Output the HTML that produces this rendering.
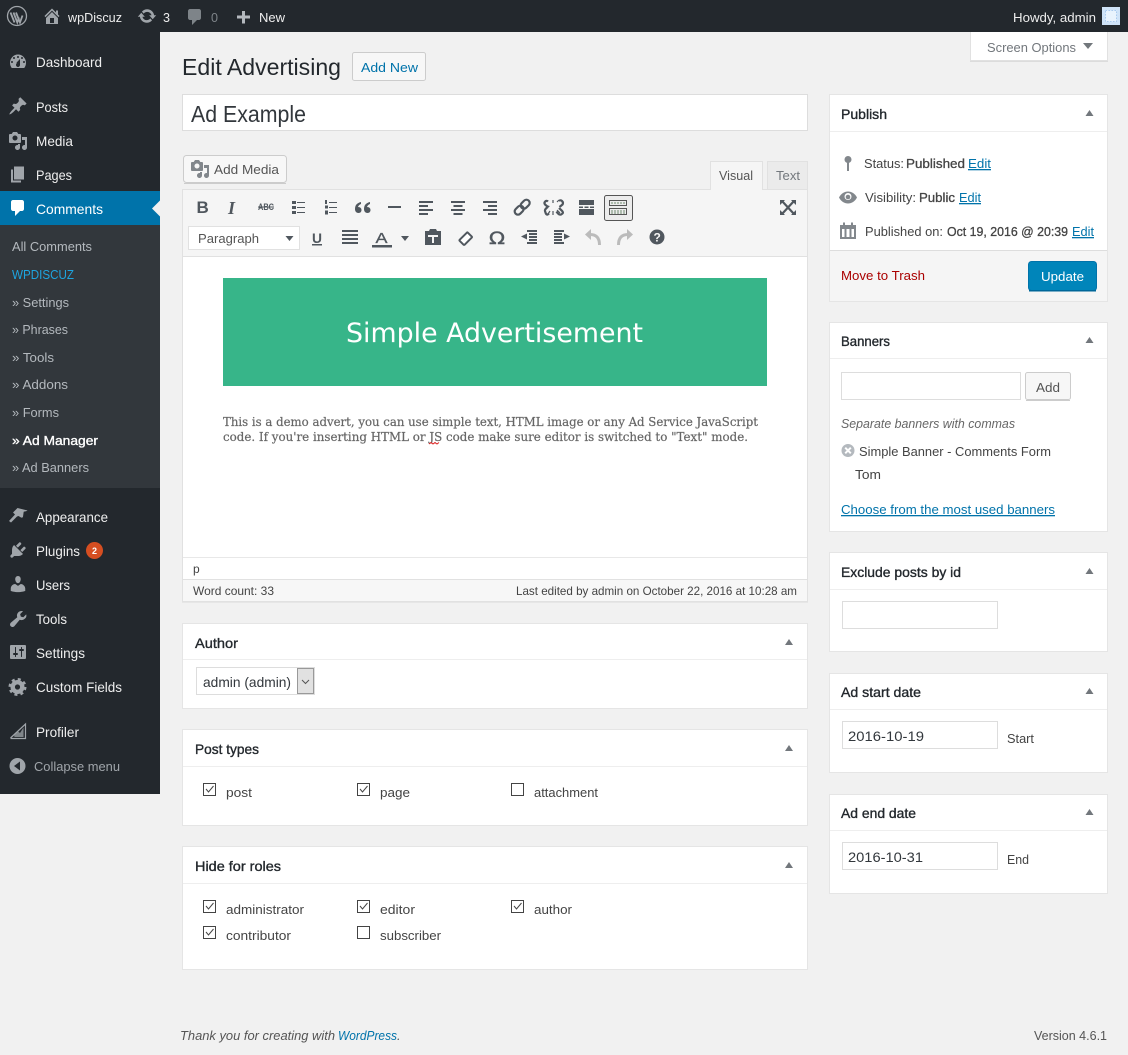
<!DOCTYPE html>
<html lang="en"><head><meta charset="utf-8"><title>Edit Advertising</title>
<style>
html,body{margin:0;padding:0;background:#f1f1f1;width:1128px;height:1055px;overflow:hidden}
svg{display:block}
text{font-family:"Liberation Sans",sans-serif;font-size:13px;fill:#444;white-space:pre}
.m{font-size:14px;fill:#eee}
.s{fill:#b4b9be}
.t{font-size:14px;fill:#23282d;stroke:#23282d;stroke-width:.35px}
.b{stroke:#444;stroke-width:.3px}
.l{fill:#0073aa;text-decoration:underline}
.i{fill:#a0a5aa}
.e{fill:#50575e}
</style></head><body>
<svg width="1128" height="1055" viewBox="0 0 1128 1055" xmlns="http://www.w3.org/2000/svg">
<rect width="1128" height="1055" fill="#f1f1f1"/>
<!-- sidebar -->
<rect x="0" y="0" width="160" height="794" fill="#23282d"/>
<rect x="0" y="225" width="160" height="263" fill="#32373c"/>
<rect x="0" y="191" width="160" height="34" fill="#0073aa"/>
<path d="M160 200.500l-8 8 8 8z" fill="#f1f1f1"/>
<!-- screen options tab -->
<rect x="970.500" y="26.500" width="137" height="34" fill="#fff" stroke="#e1e1e1"/>
<rect x="970" y="61" width="138" height="1" fill="#dcdcdc"/>
<text x="987" y="52" style="fill:#72777c" textLength="89" lengthAdjust="spacingAndGlyphs">Screen Options</text>
<path d="M1083 43h10l-5 6z" fill="#72777c"/>
<!-- admin bar -->
<rect x="0" y="0" width="1128" height="32" fill="#23282d"/>
<g fill="none" stroke="#a0a5aa"><circle cx="17" cy="16" r="9.500" stroke-width="1.300"/><path d="M10.500 12.500l4 10M13.500 12.500l3.800 10 1.700-5M16 12.500l4 10 2.500-7" stroke-width="1.800"/></g>
<path class="i" transform="translate(42,6)" d="M16 8.500l1.530 1.530-1.060 1.060L10 4.620l-6.470 6.470-1.060-1.060L10 2.500l4 4v-2h2v4zm-6-2.460l6 5.990V18H4v-5.970zM12 17v-5H8v5h4z"/>
<text x="68" y="22" style="fill:#eee" textLength="54" lengthAdjust="spacingAndGlyphs">wpDiscuz</text>
<path class="i" transform="translate(137,6)" d="M10.200 3.280c3.530 0 6.430 2.610 6.920 6h2.080l-3.500 4-3.500-4h2.320c-.45-1.970-2.210-3.450-4.320-3.450-1.450 0-2.730.71-3.540 1.780L4.950 5.660C6.230 4.200 8.110 3.280 10.200 3.280zm-.4 13.440c-3.520 0-6.430-2.610-6.920-6H.8l3.500-4c1.170 1.330 2.330 2.670 3.500 4H5.480c.45 1.970 2.210 3.450 4.320 3.450 1.450 0 2.730-.71 3.540-1.780l1.710 1.950c-1.280 1.460-3.150 2.380-5.250 2.380z"/>
<text x="163" y="22" style="fill:#eee" textLength="7" lengthAdjust="spacingAndGlyphs">3</text>
<path transform="translate(185,7)" fill="#7e8489" d="M5 2h9c1.100 0 2 .9 2 2v7c0 1.100-.9 2-2 2h-2l-5 5v-5H5c-1.100 0-2-.9-2-2V4c0-1.100.9-2 2-2z"/>
<text x="211" y="22" style="fill:#7e8489" textLength="7" lengthAdjust="spacingAndGlyphs">0</text>
<path d="M242 11h3v4.500h5v3h-5v5h-3v-5h-5v-3h5z" fill="#b4b9be"/>
<text x="259" y="22" style="fill:#eee" textLength="26" lengthAdjust="spacingAndGlyphs">New</text>
<text x="1013" y="22" style="fill:#eee" textLength="83" lengthAdjust="spacingAndGlyphs">Howdy, admin</text>
<rect x="1102" y="7" width="18" height="18" fill="#cfe3f8"/>
<rect x="1105.500" y="10.500" width="11" height="11" fill="#e9f3fd" stroke="#a9caee" stroke-dasharray="1.500 1.500"/>
<!-- sidebar icons -->
<path class="i" transform="translate(8,52)" fill-rule="evenodd" d="M3.760 16h12.480c1.100-1.430 1.760-3.210 1.760-5.150 0-4.620-3.580-8.370-8-8.370s-8 3.750-8 8.370c0 1.940.66 3.720 1.760 5.150zM10 4.000c.55 0 1 .45 1 1s-.45 1-1 1-1-.45-1-1 .45-1 1-1zM6 5.000c.55 0 1 .45 1 1s-.45 1-1 1-1-.45-1-1 .45-1 1-1zm8 0c.55 0 1 .45 1 1s-.45 1-1 1-1-.45-1-1 .45-1 1-1zm-5.370 5.550L12 7v6c0 1.100-.9 2-2 2s-2-.9-2-2c0-.57.24-1.080.63-1.450zM4 9.000c.55 0 1 .45 1 1s-.45 1-1 1-1-.45-1-1 .45-1 1-1zm12 0c.55 0 1 .45 1 1s-.45 1-1 1-1-.45-1-1 .45-1 1-1z"/>
<path class="i" transform="translate(8,96)" d="M10.440 3.020l1.820-1.820 6.360 6.350-1.830 1.820c-1.050-.68-2.480-.57-3.410.36l-.75.75c-.92.93-1.040 2.350-.35 3.410l-1.830 1.820-2.410-2.410-2.800 2.790c-.42.42-3.380 2.710-3.800 2.290s1.860-3.390 2.280-3.810l2.790-2.790L4.100 9.360l1.830-1.820c1.050.69 2.480.57 3.400-.36l.75-.75c.93-.92 1.050-2.350.36-3.410z"/>
<path class="i" transform="translate(8,131)" fill-rule="evenodd" d="M13 11V4c0-.55-.45-1-1-1h-1.670L9 1H5L3.670 3H2c-.55 0-1 .45-1 1v7c0 .55.45 1 1 1h10c.55 0 1-.45 1-1zM7 4.500c1.380 0 2.500 1.120 2.500 2.500S8.380 9.500 7 9.500 4.500 8.380 4.500 7 5.620 4.500 7 4.500zM14 6h5v10.500c0 1.380-1.120 2.500-2.500 2.500S14 17.880 14 16.500s1.120-2.500 2.500-2.500c.17 0 .34.020.5.050V9h-3V6zm-4 8.050V13h2v3.500c0 1.380-1.120 2.500-2.500 2.500S7 17.880 7 16.500 8.120 14 9.500 14c.17 0 .34.020.5.050z"/>
<path class="i" transform="translate(8,164.500)" d="M6 15V2h10v13H6zm-1 1h8v2H3V5h2v11z"/>
<path transform="translate(8,198)" fill="#fff" d="M5 2h9c1.100 0 2 .9 2 2v7c0 1.100-.9 2-2 2h-2l-5 5v-5H5c-1.100 0-2-.9-2-2V4c0-1.100.9-2 2-2z"/>
<path class="i" d="M9 521l6-6.500-2-2 4.500-4.500 10 2.500c-1.500 1.200-3 .8-3.800 1.200l-.7 5c-.3.8-1.200 1.200-2 .8l-2.500-1.500-1.500.5-6 6z"/>
<path class="i" transform="translate(8,540)" d="M13.110 4.360L9.870 7.600 8 5.730l3.240-3.240c.35-.34 1.050-.2 1.560.32.52.51.66 1.210.31 1.550zm-8 1.770l.91-1.120 9.010 9.010-1.190.84c-.71.71-2.630 1.160-3.820 1.160H6.140L4.900 17.260c-.59.59-1.540.59-2.120 0-.59-.58-.59-1.530 0-2.120l1.240-1.240v-3.880c0-1.130.4-3.190 1.090-3.890zm7.260 3.970l3.240-3.240c.34-.35 1.040-.21 1.550.31.52.51.66 1.210.31 1.550l-3.240 3.250z"/>
<path class="i" transform="translate(8,574)" d="M10 9.250c-2.270 0-2.730-3.440-2.730-3.440C7 4.020 7.820 2 9.970 2c2.160 0 2.980 2.020 2.710 3.810 0 0-.41 3.440-2.680 3.440zm0 2.570L12.720 10c2.390 0 4.520 2.330 4.520 4.530v2.490s-3.650 1.130-7.240 1.130c-3.650 0-7.240-1.130-7.240-1.130v-2.490c0-2.250 1.940-4.480 4.470-4.480z"/>
<path class="i" transform="translate(8,609)" d="M16.680 9.770c-1.340 1.340-3.300 1.670-4.950.99l-5.410 6.520c-.99.99-2.590.99-3.570 0-.99-.98-.99-2.580 0-3.570l6.520-5.420c-.68-1.650-.35-3.610.99-4.950 1.280-1.280 3.120-1.640 4.720-1.110l-2.850 2.850.7 2.500 2.500.7 2.850-2.850c.53 1.600.17 3.440-1.500 4.340z"/>
<path class="i" transform="translate(8,642)" fill-rule="evenodd" d="M18 16V4c0-.55-.45-1-1-1H3c-.55 0-1 .45-1 1v12c0 .55.45 1 1 1h14c.55 0 1-.45 1-1zM8 11h1c.55 0 1 .45 1 1s-.45 1-1 1H8v1.500c0 .28-.22.5-.5.5s-.5-.22-.5-.5V13H6c-.55 0-1-.45-1-1s.45-1 1-1h1V5.500c0-.28.22-.5.5-.5s.5.22.5.5V11zm5-2h-1c-.55 0-1-.45-1-1s.45-1 1-1h1V5.500c0-.28.22-.5.5-.5s.5.22.5.5V7h1c.55 0 1 .45 1 1s-.45 1-1 1h-1v5.500c0 .28-.22.5-.5.5s-.5-.22-.5-.5V9z"/>
<g fill="none" stroke="#a0a5aa"><circle cx="17.500" cy="687" r="4.800" stroke-width="4.400"/><circle cx="17.500" cy="687" r="7.800" stroke-width="2.400" stroke-dasharray="3 3.130"/></g>
<path d="M10.500 738.500h15V724l-15 14" fill="none" stroke="#a0a5aa" stroke-width="1.200"/>
<path d="M14 735l3.500-4 2.500 2 3.500-5.500v9.500h-9z" fill="#a0a5aa" opacity=".75"/>
<circle cx="17.500" cy="766" r="8" fill="#a0a5aa"/><path d="M20 761.500v9l-6-4.500z" fill="#23282d"/>
<!-- sidebar text -->
<text class="m" x="36" y="67" textLength="66" lengthAdjust="spacingAndGlyphs">Dashboard</text>
<text class="m" x="36" y="112" textLength="32" lengthAdjust="spacingAndGlyphs">Posts</text>
<text class="m" x="36" y="146" textLength="37" lengthAdjust="spacingAndGlyphs">Media</text>
<text class="m" x="36" y="180" textLength="36" lengthAdjust="spacingAndGlyphs">Pages</text>
<text class="m" x="36" y="214" style="fill:#fff" textLength="67" lengthAdjust="spacingAndGlyphs">Comments</text>
<text class="s" x="12" y="251" textLength="80" lengthAdjust="spacingAndGlyphs">All Comments</text>
<text x="12" y="279" style="fill:#1ea5e0" textLength="62" lengthAdjust="spacingAndGlyphs">WPDISCUZ</text>
<text class="s" x="12" y="307" textLength="57" lengthAdjust="spacingAndGlyphs">» Settings</text>
<text class="s" x="12" y="334" textLength="56" lengthAdjust="spacingAndGlyphs">» Phrases</text>
<text class="s" x="12" y="362" textLength="42" lengthAdjust="spacingAndGlyphs">» Tools</text>
<text class="s" x="12" y="389" textLength="56" lengthAdjust="spacingAndGlyphs">» Addons</text>
<text class="s" x="12" y="417" textLength="47" lengthAdjust="spacingAndGlyphs">» Forms</text>
<text x="12" y="445" style="fill:#fff;stroke:#fff;stroke-width:.35px" textLength="86" lengthAdjust="spacingAndGlyphs">» Ad Manager</text>
<text class="s" x="12" y="472" textLength="77" lengthAdjust="spacingAndGlyphs">» Ad Banners</text>
<text class="m" x="36" y="522" textLength="72" lengthAdjust="spacingAndGlyphs">Appearance</text>
<text class="m" x="36" y="556" textLength="44" lengthAdjust="spacingAndGlyphs">Plugins</text>
<circle cx="94.500" cy="550.500" r="8.500" fill="#d54e21"/>
<text x="92" y="554" style="font-size:9px;fill:#fff;font-weight:bold">2</text>
<text class="m" x="36" y="590" textLength="34" lengthAdjust="spacingAndGlyphs">Users</text>
<text class="m" x="36" y="624" textLength="31" lengthAdjust="spacingAndGlyphs">Tools</text>
<text class="m" x="36" y="658" textLength="49" lengthAdjust="spacingAndGlyphs">Settings</text>
<text class="m" x="36" y="692" textLength="86" lengthAdjust="spacingAndGlyphs">Custom Fields</text>
<text class="m" x="36" y="737" textLength="43" lengthAdjust="spacingAndGlyphs">Profiler</text>
<text x="34" y="771" style="fill:#a0a5aa" textLength="86" lengthAdjust="spacingAndGlyphs">Collapse menu</text>

<!-- header -->
<text x="182" y="75" style="font-size:23px;fill:#23282d" textLength="159" lengthAdjust="spacingAndGlyphs">Edit Advertising</text>
<rect x="352.500" y="52.500" width="73" height="28" rx="2" fill="#f7f7f7" stroke="#ccc"/>
<text x="361" y="72" style="fill:#0073aa" textLength="57" lengthAdjust="spacingAndGlyphs">Add New</text>
<rect x="182.500" y="94.500" width="625" height="36" fill="#fff" stroke="#ddd"/>
<text x="191" y="122" style="font-size:23px;fill:#32373c" textLength="115" lengthAdjust="spacingAndGlyphs">Ad Example</text>

<!-- editor -->
<rect x="183.500" y="155.500" width="103" height="27" rx="3" fill="#f7f7f7" stroke="#ccc"/>
<rect x="184" y="183" width="102" height="1" fill="#ccc"/>
<path transform="translate(190,159)" fill="#82878c" fill-rule="evenodd" d="M13 11V4c0-.55-.45-1-1-1h-1.670L9 1H5L3.670 3H2c-.55 0-1 .45-1 1v7c0 .55.45 1 1 1h10c.55 0 1-.45 1-1zM7 4.500c1.380 0 2.500 1.120 2.500 2.500S8.380 9.500 7 9.500 4.500 8.380 4.500 7 5.620 4.500 7 4.500zM14 6h5v10.500c0 1.380-1.120 2.500-2.500 2.500S14 17.880 14 16.500s1.120-2.500 2.500-2.500c.17 0 .34.020.5.050V9h-3V6zm-4 8.050V13h2v3.500c0 1.380-1.120 2.500-2.500 2.500S7 17.880 7 16.500 8.120 14 9.500 14c.17 0 .34.020.5.050z"/>
<text x="214" y="174" style="fill:#555" textLength="65" lengthAdjust="spacingAndGlyphs">Add Media</text>
<rect x="710.500" y="161.500" width="52" height="29" fill="#f5f5f5" stroke="#e1e1e1"/>
<rect x="767.500" y="161.500" width="40" height="28" fill="#ebebeb" stroke="#e1e1e1"/>
<text x="719" y="180" style="fill:#555" textLength="34" lengthAdjust="spacingAndGlyphs">Visual</text>
<text x="776" y="180" style="fill:#72777c" textLength="24" lengthAdjust="spacingAndGlyphs">Text</text>
<rect x="182.500" y="189.500" width="625" height="412" fill="#fff" stroke="#e1e1e1"/>
<rect x="183" y="190" width="624" height="66" fill="#f5f5f5"/>
<rect x="711" y="189" width="51" height="2" fill="#f5f5f5"/>
<rect x="183" y="256" width="624" height="1" fill="#e1e1e1"/>
<rect x="183" y="557" width="624" height="1" fill="#e8e8e8"/>
<rect x="183" y="579" width="624" height="1" fill="#e1e1e1"/>
<rect x="183" y="580" width="624" height="21" fill="#f7f7f7"/>
<rect x="182" y="602" width="626" height="1" fill="#e6e6e6"/>
<!-- toolbar row 1 -->
<text x="196.500" y="213" style="font-size:17px;font-weight:bold;fill:#50575e">B</text>
<text x="228" y="214" style="font-size:18px;font-weight:bold;font-style:italic;fill:#50575e;font-family:'Liberation Serif',serif">I</text>
<text x="258" y="210" style="font-size:9px;font-weight:bold;fill:#50575e" textLength="16" lengthAdjust="spacingAndGlyphs">ABC</text>
<rect x="258" y="206.500" width="16" height="1" fill="#50575e"/>
<g fill="#50575e">
<rect x="292" y="201" width="4" height="3"/><rect x="292" y="206" width="4" height="3"/><rect x="292" y="211" width="4" height="3"/>
<rect x="297" y="202" width="8" height="1"/><rect x="297" y="207" width="8" height="1"/><rect x="297" y="212" width="8" height="1"/>
<rect x="325" y="200" width="2" height="4"/><rect x="325" y="205.500" width="3" height="3"/><rect x="325" y="210.500" width="3" height="4"/>
<rect x="329" y="202" width="8" height="1"/><rect x="329" y="207" width="8" height="1"/><rect x="329" y="212" width="8" height="1"/>
<path d="M361 202c-4 1-6 3-6 7 0 2 1 4 3.500 4 2 0 3-1.500 3-3s-1-3-3.500-3c.3-1.200 1.500-2.500 3-3zM370 202c-4 1-6 3-6 7 0 2 1 4 3.500 4 2 0 3-1.500 3-3s-1-3-3.500-3c.3-1.200 1.500-2.500 3-3z"/>
<rect x="388" y="206" width="13" height="2"/>
<rect x="419" y="201" width="14" height="2"/><rect x="419" y="205" width="9" height="2"/><rect x="419" y="209" width="14" height="2"/><rect x="419" y="213" width="9" height="2"/>
<rect x="451" y="201" width="14" height="2"/><rect x="453.500" y="205" width="9" height="2"/><rect x="451" y="209" width="14" height="2"/><rect x="453.500" y="213" width="9" height="2"/>
<rect x="483" y="201" width="14" height="2"/><rect x="488" y="205" width="9" height="2"/><rect x="483" y="209" width="14" height="2"/><rect x="488" y="213" width="9" height="2"/>
<rect x="579" y="200" width="15" height="5"/><rect x="579" y="209" width="15" height="6"/><rect x="579" y="206.500" width="4" height="1.500"/><rect x="584.500" y="206.500" width="4" height="1.500"/><rect x="590" y="206.500" width="4" height="1.500"/>
</g>
<g fill="none" stroke="#50575e" stroke-width="2.200">
<rect x="514" y="207" width="10" height="6.500" rx="3.250" transform="rotate(-45 519 210)"/>
<rect x="520" y="201" width="10" height="6.500" rx="3.250" transform="rotate(-45 525 204)"/>
<path d="M549 213.500c-3 3-3.500-1-4-2.500s3-5 4-4M559 201c2 -2 5 1 3.500 3.500l-3 2.500"/>
<path d="M548 201.500c-2-2-4.500 1-3 3l3 2.500M559 208c2 2 5 4 3.500 5.500s-3.500 2-6-2" />
<path d="M553 203v-3M557 202l2-2M550 211l-2 3M553 211v4M557 210l3 3" stroke-width="1.200"/>
</g>
<rect x="604.500" y="195.500" width="28" height="25" rx="2" fill="#ececec" stroke="#555"/>
<g fill="none" stroke="#555" stroke-width="1"><rect x="609.500" y="200.500" width="17" height="5"/><rect x="609.500" y="208.500" width="17" height="6"/></g>
<path d="M611 203h14M611 211h14M611 213h14" stroke="#6e8a6e" stroke-width="1" stroke-dasharray="2 1" fill="none"/>
<path d="M782 201l12 13M794 201l-12 13" stroke="#50575e" stroke-width="2.200" fill="none"/>
<path d="M780 200h5l-5 5zM796 200h-5l5 5zM780 215h5l-5-5zM796 215h-5l5-5z" fill="#50575e"/>
<!-- toolbar row 2 -->
<rect x="188.500" y="226.500" width="111" height="23" fill="#fff" stroke="#e1e1e1"/>
<text x="198" y="243" style="fill:#555" textLength="61" lengthAdjust="spacingAndGlyphs">Paragraph</text>
<path d="M285.500 236h8l-4 5z" fill="#50575e"/>
<text x="312" y="243" style="font-size:14px;font-weight:bold;fill:#50575e" textLength="10" lengthAdjust="spacingAndGlyphs">U</text>
<rect x="312" y="244" width="10" height="1.500" fill="#50575e"/>
<g fill="#50575e">
<rect x="342" y="230" width="16" height="2"/><rect x="342" y="234" width="16" height="2"/><rect x="342" y="238" width="16" height="2"/><rect x="342" y="242" width="16" height="2"/>
<rect x="372" y="245" width="20" height="2.500"/>
<path d="M401 236h8l-4 5z"/>
<path d="M425 231h4l1-2h6l1 2h4v14h-16zM428 235v2h4v6h2v-6h4v-2z" fill-rule="evenodd"/>
<rect x="527" y="230" width="10" height="2"/><rect x="529" y="233" width="8" height="2"/><rect x="529" y="236" width="8" height="2"/><rect x="529" y="239" width="8" height="2"/><rect x="527" y="242" width="10" height="2"/>
<path d="M527 233.500v6l-6-3z"/>
<rect x="554" y="230" width="10" height="2"/><rect x="554" y="233" width="8" height="2"/><rect x="554" y="236" width="8" height="2"/><rect x="554" y="239" width="8" height="2"/><rect x="554" y="242" width="10" height="2"/>
<path d="M564 233.500v6l6-3z"/>
</g>
<text x="375.500" y="243" style="font-size:15px;fill:#50575e;stroke:#50575e;stroke-width:.3px" textLength="12" lengthAdjust="spacingAndGlyphs">A</text>
<path transform="translate(465.500,238.500) scale(.82) translate(-461,-237)" d="M458 244l-4-4c-.5-.5-.5-1 0-1.500l8.500-8.500c.5-.5 1-.5 1.500 0l4.500 4.500c.5.500.5 1 0 1.500L460 244.500c-.5.500-1.500.500-2-.5z" fill="#fff" stroke="#50575e" stroke-width="2.400"/>
<text x="489" y="244" style="font-size:17px;fill:#50575e;stroke:#50575e;stroke-width:.4px;font-family:'DejaVu Sans',sans-serif" textLength="16" lengthAdjust="spacingAndGlyphs">Ω</text>
<g id="u">
<path d="M590 234.500c6 0 9.500 3 9.500 10.500" fill="none" stroke="#bbb" stroke-width="3"/>
<path d="M591 229v11l-6-5.500z" fill="#bbb"/>
</g>
<g transform="translate(1218,0) scale(-1,1)">
<path d="M590 234.500c6 0 9.500 3 9.500 10.500" fill="none" stroke="#bbb" stroke-width="3"/>
<path d="M591 229v11l-6-5.500z" fill="#bbb"/>
</g>
<circle cx="657" cy="237" r="7.500" fill="#50575e"/>
<text x="653.500" y="241.500" style="font-size:12px;font-weight:bold;fill:#f5f5f5">?</text>
<!-- content -->
<rect x="223" y="278" width="544" height="108" fill="#37b589"/>
<text x="346" y="342" style="font-size:27px;fill:#fff;font-family:'DejaVu Sans',sans-serif" textLength="297" lengthAdjust="spacingAndGlyphs">Simple Advertisement</text>
<text x="223" y="426" style="font-family:'DejaVu Serif',serif;font-size:12px;fill:#666;stroke:#666;stroke-width:.2px" textLength="535" lengthAdjust="spacingAndGlyphs">This is a demo advert, you can use simple text, HTML image or any Ad Service JavaScript</text>
<text x="223" y="441" style="font-family:'DejaVu Serif',serif;font-size:12px;fill:#666;stroke:#666;stroke-width:.2px" textLength="525" lengthAdjust="spacingAndGlyphs">code. If you're inserting HTML or JS code make sure editor is switched to "Text" mode.</text>
<path d="M429 444l2-1.500 2 1.500 2-1.500 2 1.500 2-1.500" stroke="#d22" stroke-width="1" fill="none"/>
<text x="193" y="573" style="fill:#444;font-size:12px">p</text>
<text x="193" y="595" style="font-size:12px;fill:#444" textLength="81" lengthAdjust="spacingAndGlyphs">Word count: 33</text>
<text x="516" y="595" style="font-size:12px;fill:#444" textLength="281" lengthAdjust="spacingAndGlyphs">Last edited by admin on October 22, 2016 at 10:28 am</text>

<!-- boxes -->
<g fill="#fff" stroke="#e5e5e5">
<rect x="182.500" y="623.500" width="625" height="85"/>
<rect x="182.500" y="729.500" width="625" height="96"/>
<rect x="182.500" y="846.500" width="625" height="123"/>
<rect x="829.500" y="94.500" width="278" height="207"/>
<rect x="829.500" y="322.500" width="278" height="209"/>
<rect x="829.500" y="552.500" width="278" height="99"/>
<rect x="829.500" y="673.500" width="278" height="99"/>
<rect x="829.500" y="794.500" width="278" height="99"/>
</g>
<g fill="#eee">
<rect x="183" y="659" width="624" height="1"/>
<rect x="183" y="766" width="624" height="1"/>
<rect x="183" y="883" width="624" height="1"/>
<rect x="830" y="131" width="277" height="1"/>
<rect x="830" y="358" width="277" height="1"/>
<rect x="830" y="589" width="277" height="1"/>
<rect x="830" y="709" width="277" height="1"/>
<rect x="830" y="830" width="277" height="1"/>
</g>
<g fill="#72777c">
<path d="M785 645l4-6 4 6zM785 751l4-6 4 6zM785 868l4-6 4 6z"/>
<path d="M1085.500 116l4-6 4 6zM1085.500 343l4-6 4 6zM1085.500 574l4-6 4 6zM1085.500 694l4-6 4 6zM1085.500 815l4-6 4 6z"/>
</g>
<text class="t" x="195" y="648" textLength="43" lengthAdjust="spacingAndGlyphs">Author</text>
<rect x="196.500" y="667.500" width="118" height="27" fill="#fff" stroke="#ddd"/>
<text x="203" y="687" style="font-size:14px;fill:#32373c" textLength="88" lengthAdjust="spacingAndGlyphs">admin (admin)</text>
<rect x="297.500" y="668.500" width="16" height="25" fill="#e1e1e1" stroke="#999"/>
<path d="M302 680l3.500 3.500 3.500-3.500" fill="none" stroke="#555"/>
<text class="t" x="195" y="754" textLength="64" lengthAdjust="spacingAndGlyphs">Post types</text>
<text class="t" x="195" y="871" textLength="86" lengthAdjust="spacingAndGlyphs">Hide for roles</text>
<g fill="#fff" stroke="#444">
<rect x="203.500" y="783.500" width="12" height="12"/><rect x="357.500" y="783.500" width="12" height="12"/><rect x="511.500" y="783.500" width="12" height="12"/>
<rect x="203.500" y="900.500" width="12" height="12"/><rect x="357.500" y="900.500" width="12" height="12"/><rect x="511.500" y="900.500" width="12" height="12"/>
<rect x="203.500" y="926.500" width="12" height="12"/><rect x="357.500" y="926.500" width="12" height="12"/>
</g>
<g fill="none" stroke="#444" stroke-width="1">
<path d="M206 789l2.500 3 5-6M360 789l2.500 3 5-6M206 906l2.500 3 5-6M360 906l2.500 3 5-6M514 906l2.500 3 5-6M206 932l2.500 3 5-6"/>
</g>
<text x="226" y="797" textLength="26" lengthAdjust="spacingAndGlyphs">post</text>
<text x="380" y="797" textLength="30" lengthAdjust="spacingAndGlyphs">page</text>
<text x="534" y="797" textLength="64" lengthAdjust="spacingAndGlyphs">attachment</text>
<text x="226" y="914" textLength="78" lengthAdjust="spacingAndGlyphs">administrator</text>
<text x="380" y="914" textLength="35" lengthAdjust="spacingAndGlyphs">editor</text>
<text x="534" y="914" textLength="38" lengthAdjust="spacingAndGlyphs">author</text>
<text x="226" y="940" textLength="65" lengthAdjust="spacingAndGlyphs">contributor</text>
<text x="380" y="940" textLength="61" lengthAdjust="spacingAndGlyphs">subscriber</text>

<!-- publish -->
<text class="t" x="841" y="119" textLength="46" lengthAdjust="spacingAndGlyphs">Publish</text>
<circle cx="848" cy="159.500" r="3.500" fill="#82878c"/><rect x="847" y="160" width="2" height="11" fill="#82878c"/>
<text x="864" y="168" textLength="40" lengthAdjust="spacingAndGlyphs">Status:</text>
<text class="b" x="906" y="168" textLength="59" lengthAdjust="spacingAndGlyphs">Published</text>
<text class="l" x="968" y="168" textLength="23" lengthAdjust="spacingAndGlyphs">Edit</text>
<path d="M839 197.500c2-4 5.500-6 9-6s7 2 9 6c-2 4-5.500 6-9 6s-7-2-9-6z" fill="#82878c"/><circle cx="848" cy="196.500" r="3.500" fill="#fff"/><circle cx="848" cy="197" r="2.300" fill="#82878c"/>
<text x="865" y="202" textLength="51" lengthAdjust="spacingAndGlyphs">Visibility:</text>
<text class="b" x="919" y="202" textLength="36" lengthAdjust="spacingAndGlyphs">Public</text>
<text class="l" x="959" y="202" textLength="22" lengthAdjust="spacingAndGlyphs">Edit</text>
<path d="M840 225h3v-2.500h2v2.500h6v-2.500h2v2.500h3v14h-16zM842 229v8h2.500v-8zM846.500 229v8h3v-8zM851.500 229v8h2.500v-8z" fill="#82878c" fill-rule="evenodd"/>
<text x="865" y="236" textLength="78" lengthAdjust="spacingAndGlyphs">Published on:</text>
<text class="b" x="947" y="236" textLength="121" lengthAdjust="spacingAndGlyphs">Oct 19, 2016 @ 20:39</text>
<text class="l" x="1072" y="236" textLength="22" lengthAdjust="spacingAndGlyphs">Edit</text>
<rect x="830" y="250" width="277" height="51" fill="#f5f5f5"/>
<rect x="830" y="250" width="277" height="1" fill="#ddd"/>
<text x="841" y="280" style="fill:#a00" textLength="84" lengthAdjust="spacingAndGlyphs">Move to Trash</text>
<rect x="1028.500" y="261.500" width="68" height="29" rx="3" fill="#0085ba" stroke="#0073aa"/>
<rect x="1029" y="290" width="67" height="1.500" fill="#006799"/>
<text x="1041" y="281" style="fill:#fff" textLength="43" lengthAdjust="spacingAndGlyphs">Update</text>

<!-- banners -->
<text class="t" x="841" y="346" textLength="49" lengthAdjust="spacingAndGlyphs">Banners</text>
<rect x="841.500" y="372.500" width="179" height="27" fill="#fff" stroke="#ddd"/>
<rect x="1025.500" y="372.500" width="45" height="27" rx="2" fill="#f7f7f7" stroke="#ccc"/>
<rect x="1026" y="400" width="44" height="1" fill="#ccc"/>
<text x="1036" y="392" style="fill:#555" textLength="24" lengthAdjust="spacingAndGlyphs">Add</text>
<text x="841" y="428" style="font-style:italic;fill:#666" textLength="174" lengthAdjust="spacingAndGlyphs">Separate banners with commas</text>
<circle cx="848" cy="450.500" r="6.500" fill="#b4b9be"/>
<path d="M845.200 447.700l5.600 5.600M850.800 447.700l-5.600 5.600" stroke="#fff" stroke-width="2"/>
<text x="859" y="456" textLength="192" lengthAdjust="spacingAndGlyphs">Simple Banner - Comments Form</text>
<text x="855" y="479" textLength="26" lengthAdjust="spacingAndGlyphs">Tom</text>
<text class="l" x="841" y="514" textLength="214" lengthAdjust="spacingAndGlyphs">Choose from the most used banners</text>

<!-- exclude/dates -->
<text class="t" x="841" y="577" textLength="120" lengthAdjust="spacingAndGlyphs">Exclude posts by id</text>
<rect x="842.500" y="601.500" width="155" height="27" fill="#fff" stroke="#ddd"/>
<text class="t" x="841" y="697" textLength="80" lengthAdjust="spacingAndGlyphs">Ad start date</text>
<rect x="842.500" y="721.500" width="155" height="27" fill="#fff" stroke="#ddd"/>
<text x="848" y="741" style="font-size:14px;fill:#32373c" textLength="76" lengthAdjust="spacingAndGlyphs">2016-10-19</text>
<text x="1007" y="743" textLength="27" lengthAdjust="spacingAndGlyphs">Start</text>
<text class="t" x="841" y="818" textLength="75" lengthAdjust="spacingAndGlyphs">Ad end date</text>
<rect x="842.500" y="842.500" width="155" height="27" fill="#fff" stroke="#ddd"/>
<text x="848" y="862" style="font-size:14px;fill:#32373c" textLength="75" lengthAdjust="spacingAndGlyphs">2016-10-31</text>
<text x="1007" y="864" textLength="22" lengthAdjust="spacingAndGlyphs">End</text>

<!-- footer -->
<text x="180" y="1040" style="font-style:italic;fill:#555" textLength="155" lengthAdjust="spacingAndGlyphs">Thank you for creating with</text>
<text x="338" y="1040" style="font-style:italic;fill:#0073aa" textLength="59" lengthAdjust="spacingAndGlyphs">WordPress</text>
<text x="397" y="1040" style="font-style:italic;fill:#555">.</text>
<text x="1034" y="1040" style="fill:#555" textLength="73" lengthAdjust="spacingAndGlyphs">Version 4.6.1</text>
</svg>
</body></html>
